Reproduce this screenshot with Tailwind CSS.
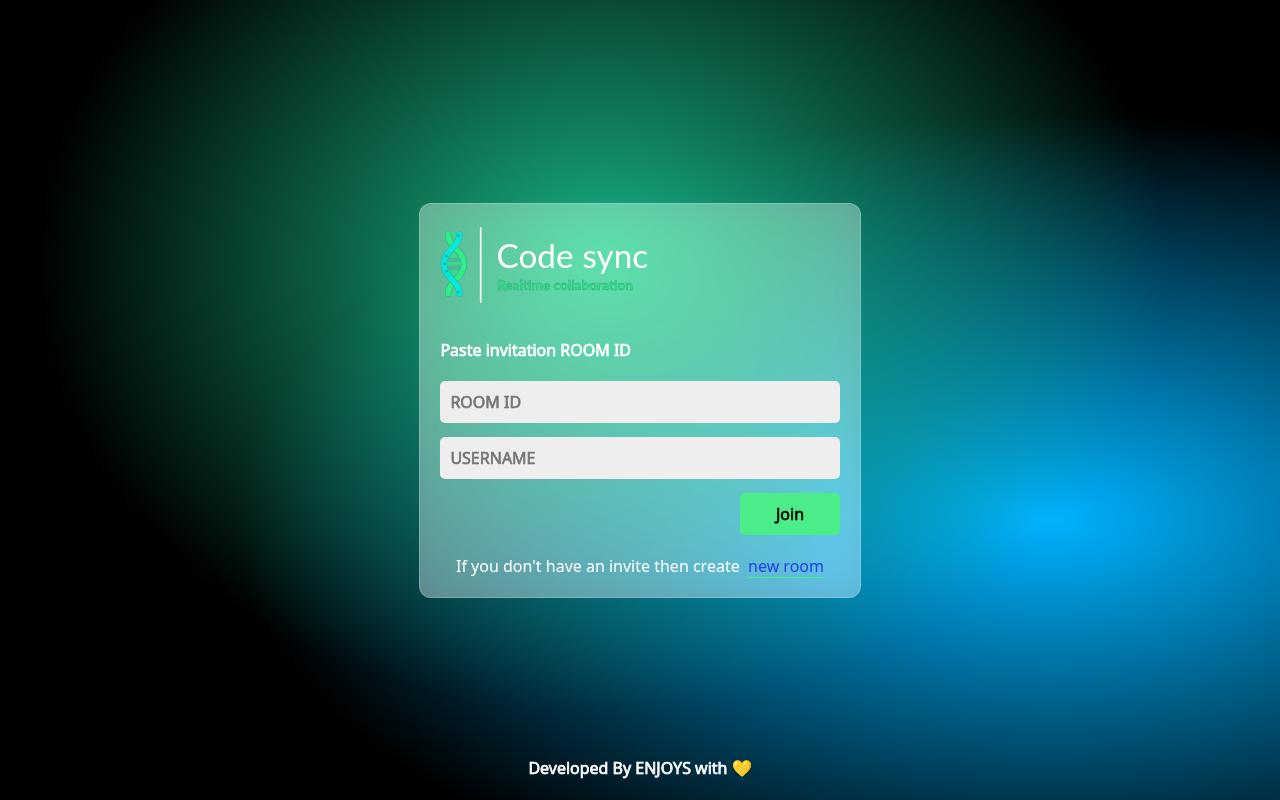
<!DOCTYPE html>
<html lang="en">
<head>
<meta charset="utf-8">
<title>Code sync</title>
<script src="https://cdn.jsdelivr.net/npm/@tailwindcss/browser@4"></script>
</head>
<body class="h-screen overflow-hidden bg-black bg-[radial-gradient(at_47%_33%,hsl(162,77%,40%)_0,transparent_59%),radial-gradient(at_82%_65%,hsl(198,100%,50%)_0,transparent_55%)] font-['Noto_Sans',sans-serif] text-base text-white">
<div class="flex h-full flex-col items-center">
  <main class="mt-[203px] h-[395px] w-[442px] shrink-0 rounded-xl border border-white/20 bg-white/37 p-5 backdrop-blur-lg backdrop-saturate-[180%]">
    <svg class="block h-20 w-[212px]" viewBox="0 0 212 80" fill="none" stroke-linecap="round">
      <path d="M7 31h13v18H7z" fill="#4fb598"/>
      <g stroke="#30e087" stroke-width="3.200">
        <path d="M9 10.500h10M8 32h13M7 39.700h15M8 47.500h13M9 69h10"/>
      </g>
      <path d="M8 10.500C8 23 24 26 24 40C24 54 8 57 8 69.500" stroke="#359f83" stroke-width="6.200"/>
      <path d="M8 10.500C8 23 24 26 24 40C24 54 8 57 8 69.500" stroke="#30ed88" stroke-width="5.400"/>
      <path d="M19.500 10.500C19.500 23 4 26 4 40C4 54 19.500 57 19.500 69.500" stroke="#20a5a5" stroke-width="6.200"/>
      <path d="M19.500 10.500C19.500 23 4 26 4 40C4 54 19.500 57 19.500 69.500" stroke="#08e9de" stroke-width="5.400"/>
      <g fill="#07a5b0"><circle cx="18.500" cy="11.500" r="1.300"/><circle cx="6.500" cy="32" r="1.300"/><circle cx="4.800" cy="39.700" r="1.300"/><circle cx="6.500" cy="47.500" r="1.300"/><circle cx="18.500" cy="68" r="1.300"/></g>
      <path d="M40.700 4v74" stroke="#fff" stroke-width="1.700"/>
      <g fill="#fff" class="font-['Lato',sans-serif] text-[33px]">
        <text x="56.500" y="43.500" textLength="77" lengthAdjust="spacingAndGlyphs">Code</text>
        <text x="142.500" y="43.500" textLength="65.500" lengthAdjust="spacingAndGlyphs">sync</text>
      </g>
      <text x="57" y="65.500" textLength="136" lengthAdjust="spacingAndGlyphs" fill="#2fe47f" stroke="#2b9f70" stroke-width=".3" class="font-['Lato',sans-serif] text-[12.5px] font-bold">Realtime collaboration</text>
    </svg>
    <h4 class="mt-[34px] mb-[19px] h-6 pl-[0.4px] leading-6 [-webkit-text-stroke:0.65px]">Paste invitation ROOM ID</h4>
    <form class="flex flex-col gap-3.5">
      <input class="h-[42px] rounded-[5px] bg-[#eee] pr-2.5 pl-[10.4px] text-black [-webkit-text-stroke:0.65px] placeholder:text-[#757575]" placeholder="ROOM ID">
      <input class="h-[42px] rounded-[5px] bg-[#eee] pr-2.5 pl-[10.4px] text-black [-webkit-text-stroke:0.65px] placeholder:text-[#757575]" placeholder="USERNAME">
      <button type="button" class="h-[42px] w-[100px] self-end rounded-[5px] bg-[#4aed88] text-black [-webkit-text-stroke:0.65px]">Join</button>
    </form>
    <p class="mt-5 text-center leading-[22px]">If you don't have an invite then create &nbsp;<a href="#" class="border-b border-[#4aed88] text-[#2340e8]">new room</a></p>
  </main>
  <footer class="mt-auto mb-5 leading-6 [-webkit-text-stroke:0.65px]">Developed By ENJOYS with 💛</footer>
</div>
</body>
</html>
